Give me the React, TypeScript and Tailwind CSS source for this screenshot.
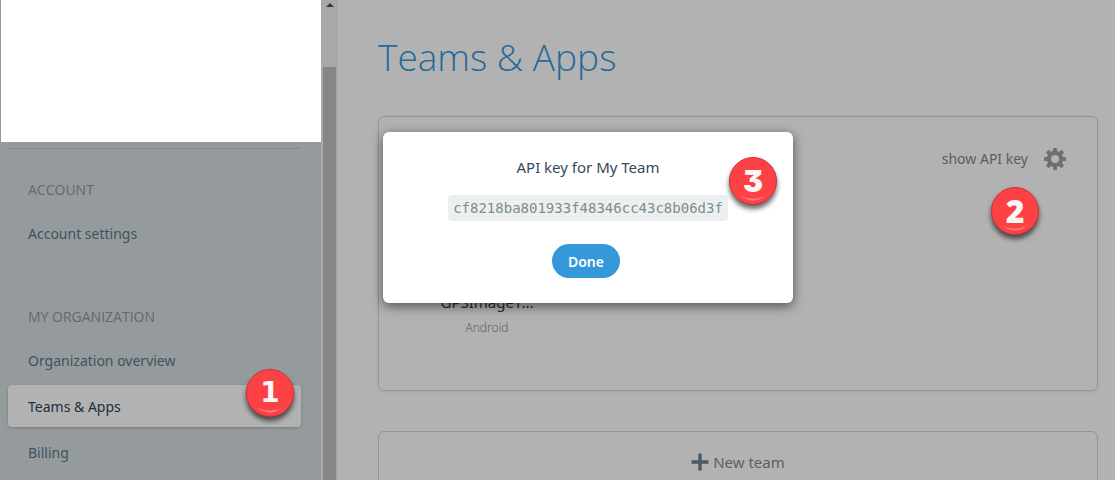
import { clsx } from "clsx";

const teeth = [0, 45, 90, 135, 180, 225, 270, 315];

function GearIcon() {
  return (
    <svg viewBox="0 0 22 22" className="size-[22px]" aria-hidden="true">
      <circle cx="11" cy="11" r="6.2" fill="none" stroke="currentColor" strokeWidth="4.2" />
      {teeth.map((angle) => (
        <rect
          key={angle}
          x="9"
          y="0"
          width="4"
          height="5"
          rx="0.8"
          fill="currentColor"
          transform={`rotate(${angle} 11 11)`}
        />
      ))}
    </svg>
  );
}

function PlusIcon() {
  return (
    <svg viewBox="0 0 18 18" className="size-[18px]" aria-hidden="true">
      <path d="M9 0.5V17.5M0.5 9H17.5" stroke="currentColor" strokeWidth="3.4" fill="none" />
    </svg>
  );
}

function StepBadge({ label, className }: { label: string; className: string }) {
  return (
    <span
      className={clsx(
        "absolute flex size-12 items-center justify-center rounded-full border border-[#c9333a] bg-[#fd4144] leading-none text-[#f7f7f7] shadow-[0_4px_5px_rgba(0,0,0,0.6)]",
        className,
      )}
    >
      {label}
      <svg viewBox="0 0 48 48" className="absolute inset-0 size-full" aria-hidden="true">
        <path d="M11 39.5Q24 49.5 37 39.5Q24 45.5 11 39.5Z" fill="#ff7f81" />
      </svg>
    </span>
  );
}

function NavLink({ label }: { label: string }) {
  return (
    <a href="#" className="flex h-[42px] items-center px-5 text-[#405261]">
      {label}
    </a>
  );
}

function NavHeading({ label, className }: { label: string; className: string }) {
  return (
    <h2
      className={clsx(
        "px-5 font-['Open_Sans',sans-serif] text-[14px] leading-[22px] text-[#63686a]",
        className,
      )}
    >
      {label}
    </h2>
  );
}

function Sidebar() {
  return (
    <aside className="flex w-[338px] shrink-0 bg-[#959b9d]">
      <div className="flex-1">
        <div className="ml-px h-[142px] bg-white" />
        <nav className="mt-1.5 mr-5 ml-2 border-t border-[#858b8d] text-[14px]">
          <NavHeading label="ACCOUNT" className="mt-[30px]" />
          <div className="mt-[11px]">
            <NavLink label="Account settings" />
          </div>
          <NavHeading label="MY ORGANIZATION" className="mt-[52px]" />
          <div className="mt-[11px] flex flex-col gap-1">
            <NavLink label="Organization overview" />
            <a
              href="#"
              aria-current="page"
              className="relative flex h-[42px] items-center rounded bg-[#b2b2b2] px-5 text-[#222e3b] shadow-[0_1px_3px_rgba(0,0,0,0.2)]"
            >
              Teams &amp; Apps
              <StepBadge
                label="1"
                className="-top-4 right-[7px] font-['DejaVu_Sans'] text-[28px] font-bold"
              />
            </a>
            <NavLink label="Billing" />
          </div>
        </nav>
      </div>
      <div className="flex w-[17px] flex-col items-center bg-[#a8a8a8]">
        <svg viewBox="0 0 8 4" className="mt-[3px] h-1 w-2" aria-hidden="true">
          <path d="M4 0L8 4H0Z" fill="#353535" />
        </svg>
        <div className="mt-[60px] w-[13px] flex-1 bg-[#868686]" />
      </div>
    </aside>
  );
}

function ApiKeyDialog() {
  return (
    <div
      role="dialog"
      aria-labelledby="api-key-title"
      className="absolute top-[15px] left-1 flex w-[410px] flex-col items-center rounded-md bg-white pt-[23px] pb-[25px] shadow-[0_3px_12px_rgba(0,0,0,0.55)]"
    >
      <h2 id="api-key-title" className="text-[15px] leading-6 text-[#34495e]">
        API key for My Team
      </h2>
      <code className="mt-4 rounded bg-[#ecf0f1] px-[5px] font-['DejaVu_Sans_Mono',monospace] text-[14px] leading-[26px] text-[#7f8c8d]">
        cf8218ba801933f48346cc43c8b06d3f
      </code>
      <button
        type="button"
        className="mt-[23px] mr-1 h-[34px] rounded-full bg-[#3498db] px-4 text-[14px] font-semibold text-white"
      >
        Done
      </button>
      <StepBadge
        label="3"
        className="top-[25px] right-4 font-['Inter'] text-[30px] font-black [font-feature-settings:'cv09']"
      />
    </div>
  );
}

export default function App() {
  return (
    <div className="flex h-screen overflow-hidden bg-[#b2b2b2] font-['Noto_Sans',sans-serif]">
      <Sidebar />
      <main className="min-w-0 flex-1 pr-[17px] pl-10">
        <h1 className="pt-[30px] font-['Open_Sans',sans-serif] text-[37px] leading-[54px] font-light text-[#246a9b]">
          Teams &amp; Apps
        </h1>
        <section className="relative mt-8 h-[275px] rounded-md border border-[#8d9798] shadow-[0_1px_3px_rgba(0,0,0,0.08)]">
          <div className="flex items-center justify-end gap-4 pt-[31px] pr-[31px]">
            <button type="button" className="text-[14px] leading-[22px] text-[#595e60]">
              show API key
            </button>
            <button type="button" aria-label="Team settings" className="text-[#6f6f6f]">
              <GearIcon />
            </button>
          </div>
          <div className="mt-[120px] ml-[58px] w-[100px] text-center">
            <div className="text-[15px] leading-6 whitespace-nowrap text-[#222e3b]">GPSImageT...</div>
            <div className="mt-1 font-['Open_Sans',sans-serif] text-[12px] leading-5 font-light text-[#55595a]">
              Android
            </div>
          </div>
          <StepBadge
            label="2"
            className="top-[70px] right-[58px] font-['Open_Sans'] text-[32px] font-extrabold"
          />
          <ApiKeyDialog />
        </section>
        <section className="mt-10 rounded-md border border-[#8d9798]">
          <button
            type="button"
            className="flex h-[60px] w-full items-center justify-center gap-1 text-[15px] text-[#5b6062]"
          >
            <span className="text-[#465c6a]">
              <PlusIcon />
            </span>
            New team
          </button>
        </section>
      </main>
    </div>
  );
}
